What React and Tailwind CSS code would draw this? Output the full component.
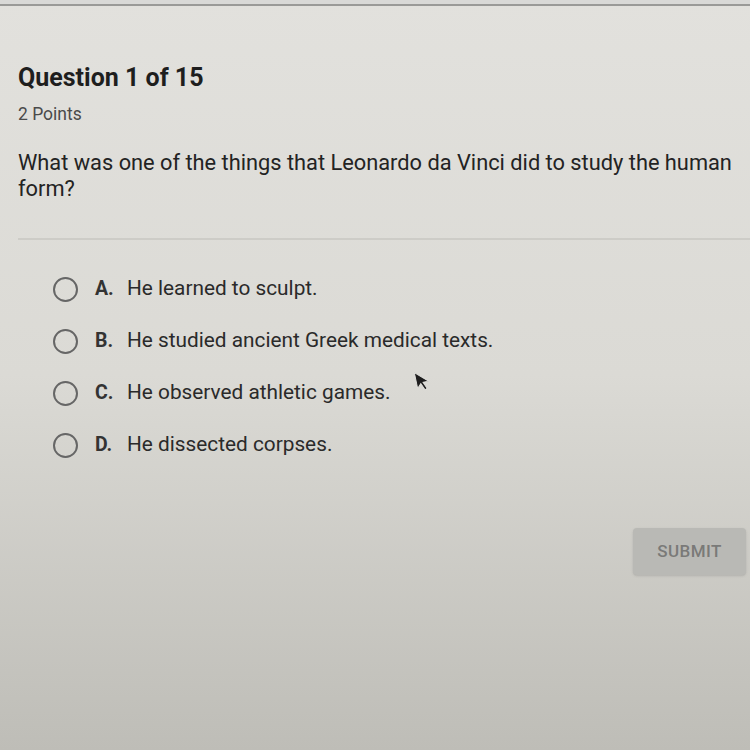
const OPTIONS = [
  { letter: 'A.', text: 'He learned to sculpt.' },
  { letter: 'B.', text: 'He studied ancient Greek medical texts.' },
  { letter: 'C.', text: 'He observed athletic games.' },
  { letter: 'D.', text: 'He dissected corpses.' },
]

export default function App() {
  return (
    <div
      className="relative w-[750px] h-[750px] overflow-hidden bg-linear-to-b from-[#e2e1dd] via-[#dbdad5] to-[#bebdb7] text-[#222]"
      style={{ fontFamily: 'Roboto, "Liberation Sans", sans-serif' }}
    >
      <div className="h-[6px] bg-[#d9d9d7] border-b-2 border-[#9a9a98]" />

      <div className="px-[18px] pt-[56px]">
        <h1 className="text-[25px] leading-[32px] font-bold text-[#1e1e1e]">Question 1 of 15</h1>
        <p className="mt-[8px] text-[17.5px] leading-[24px] text-[#4a4a4a]">2 Points</p>
        <p className="mt-[24px] text-[21.8px] leading-[26px] text-[#232323]">
          What was one of the things that Leonardo da Vinci did to study the human form?
        </p>
      </div>

      <div className="mt-[36px] ml-[18px] h-[2px] bg-[#cdccc7]" />

      <div className="mt-[36px] pl-[53px] flex flex-col gap-[26px]">
        {OPTIONS.map((o) => (
          <div key={o.letter} className="flex items-center h-[26px]">
            <span className="w-[25px] h-[25px] rounded-full border-[2.5px] border-[#666] shrink-0" />
            <span className="ml-[17px] w-[32px] text-[19.5px] font-bold text-[#333]">{o.letter}</span>
            <span className="text-[20.8px] text-[#2a2a2a]">{o.text}</span>
          </div>
        ))}
      </div>

      <div className="mt-[70px] flex justify-end pr-[4px]">
        <button
          type="button"
          className="w-[113px] h-[47px] rounded-[4px] bg-[#b9b9b5] text-[#7a7a78] text-[17px] font-medium tracking-wide shadow-sm"
        >
          SUBMIT
        </button>
      </div>

      <svg className="absolute left-[414px] top-[370px] w-[16px] h-[22px] -rotate-12" viewBox="0 0 12 19">
        <path d="M1 1 L1 15 L4.5 11.5 L7 17.5 L9 16.6 L6.6 10.8 L11.5 10.8 Z" fill="#1e1e1e" stroke="#e0e0dc" strokeWidth="0.8" />
      </svg>
    </div>
  )
}
